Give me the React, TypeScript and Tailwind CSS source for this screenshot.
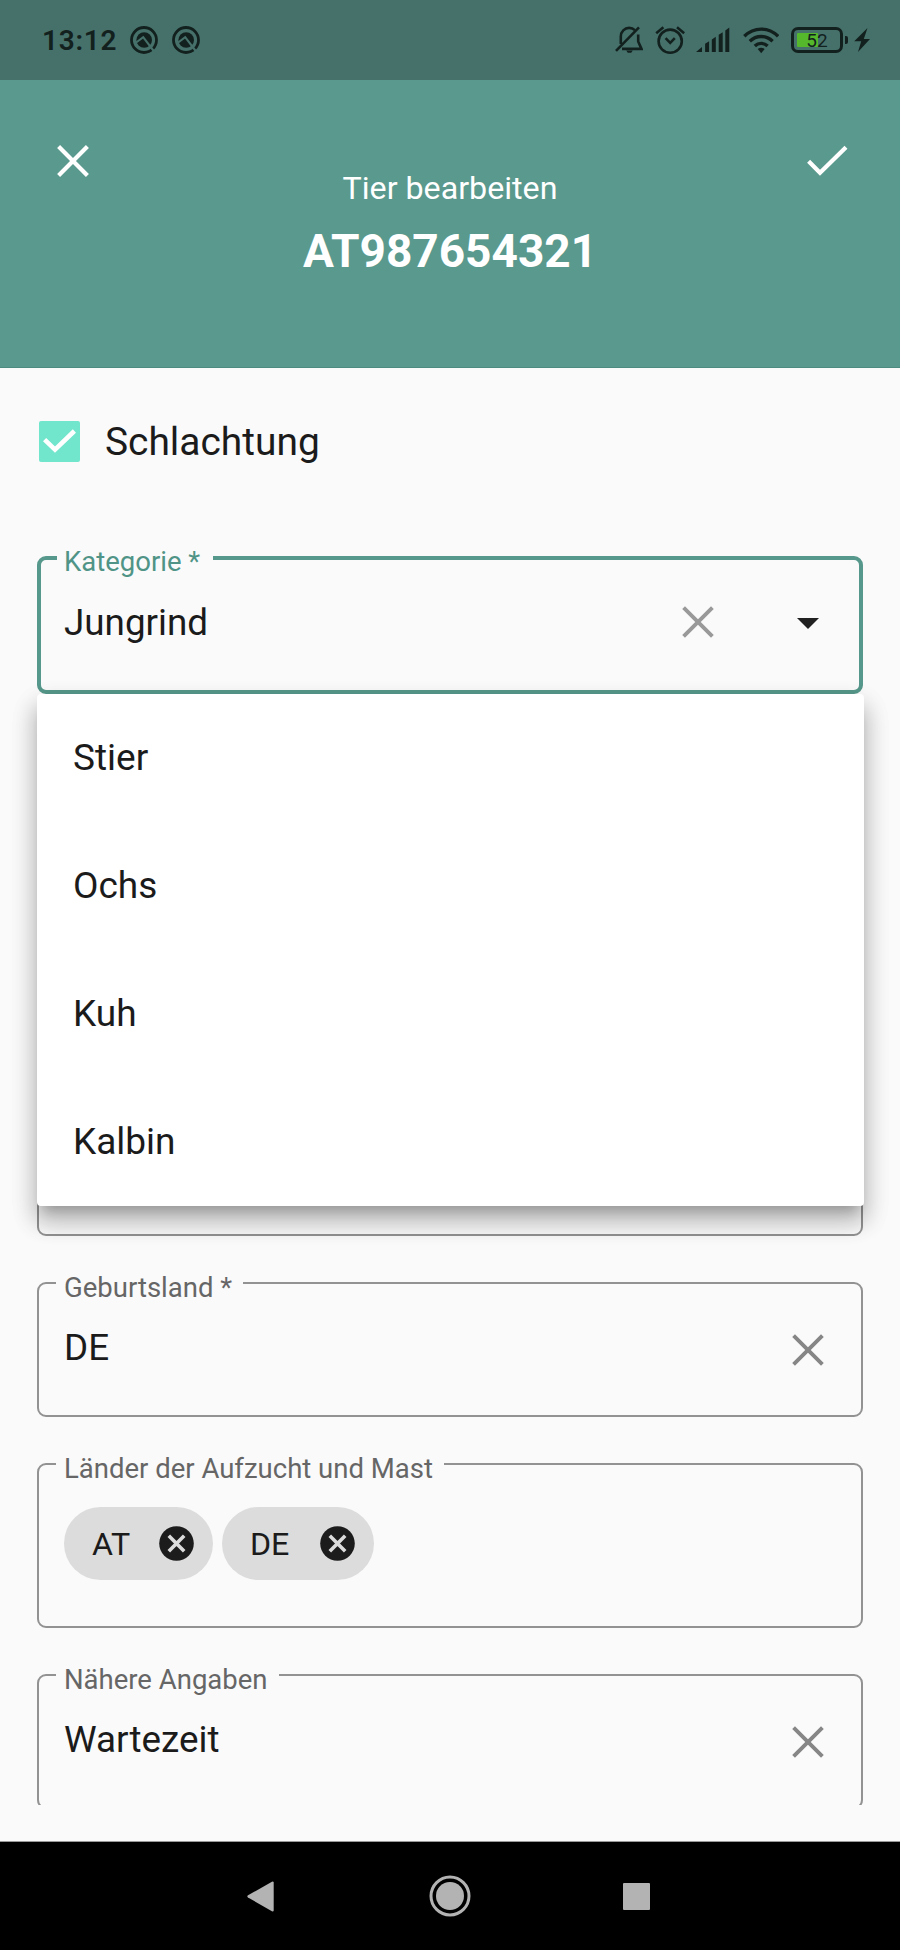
import type { ReactNode } from 'react';

const STATUS_INK = '#13211e';

function AppBadge() {
  return (
    <svg width="28" height="28" viewBox="0 0 28 28" fill="none">
      <circle cx="14" cy="14" r="12.5" stroke={STATUS_INK} strokeWidth="2.8" />
      <circle cx="14.2" cy="14" r="7.8" fill={STATUS_INK} />
      <path d="M5.5 17 13.2 11.2 24.5 26" stroke="#46716b" strokeWidth="2.1" />
    </svg>
  );
}

function BellOff() {
  return (
    <svg width="28" height="28" viewBox="614 26 28 28" fill="none" stroke={STATUS_INK} strokeWidth="2.6">
      <path d="M619.8 44V36.5c0-5 3.8-8.6 8.3-8.6 2.3 0 4.3.8 5.8 2.3M637.2 34.5v7l3.3 7.4H621" />
      <path d="M615 50.8 638 27.4" />
      <path d="M625.2 50.6h6.6l-1.6 2.1h-3.4z" fill={STATUS_INK} stroke="none" />
    </svg>
  );
}

function Alarm() {
  return (
    <svg width="30" height="30" viewBox="654 25 30 30" fill="none" stroke={STATUS_INK} strokeWidth="2.6">
      <circle cx="669.2" cy="41.2" r="11.6" />
      <path d="m664.6 38.2 4.6 4.6 4.6-4.6M655.2 33.2l7.2-6M676 27.2l7.2 6" />
    </svg>
  );
}

function Signal() {
  return (
    <svg width="34" height="26" viewBox="695 27 34 26" fill={STATUS_INK}>
      <path d="m695 52 6-5v5zM704.1 43.8l4-2.5V52h-4zM710.8 39.4l4-2.6V52h-4zM717.7 34.8l4-2.6V52h-4zM724.3 30.4l4-2.8V52h-4z" />
    </svg>
  );
}

function Wifi() {
  return (
    <svg width="36" height="28" viewBox="741.5 26 36 28" fill="none" stroke={STATUS_INK} strokeWidth="3.4">
      <path d="M742.8 36.3c9.6-9.6 24.2-9.6 33.8 0M748.3 41.2c6.5-6.3 16.3-6.3 22.8 0M753.3 46c3.7-3.5 9.1-3.5 12.8 0" />
      <path d="M756.2 49c2-1.7 5-1.7 7 0l-3.5 4.3z" fill={STATUS_INK} stroke="none" />
    </svg>
  );
}

function Battery() {
  return (
    <div className="flex items-center">
      <div className="relative flex h-[26px] w-[52px] items-center rounded-[7px] border-3 border-[#13211e] pl-[3px]">
        <div className="h-[14px] w-[21px] rounded-[1px] bg-[#55b82c]" />
        <span className="absolute inset-x-0 top-[1px] text-center text-[19px] leading-[20px] text-[#13211e]">52</span>
      </div>
      <div className="ml-[2px] h-[8px] w-[3px] rounded-r-[2px] bg-[#13211e]" />
    </div>
  );
}

function Bolt() {
  return (
    <svg width="16" height="24" viewBox="853 28 16 24" fill={STATUS_INK}>
      <path d="m866.5 28-13.3 13.2h7L857 52l12-13h-6.2z" />
    </svg>
  );
}

function Cross({ className = '', width = 4.2 }: { className?: string; width?: number }) {
  return (
    <svg width="32" height="32" viewBox="0 0 32 32" fill="none" stroke="currentColor" strokeWidth={width} className={className}>
      <path d="m1.6 1.6 28.8 28.8M30.4 1.6 1.6 30.4" />
    </svg>
  );
}

type FieldProps = {
  label?: string;
  gap?: string;
  box?: string;
  active?: boolean;
  children?: ReactNode;
};

function Field({ label, gap = '', box = 'h-[135px]', active = false, children }: FieldProps) {
  return (
    <fieldset
      className={
        active
          ? 'h-[138px] min-w-0 shrink-0 rounded-[9px] border-4 border-[#56988b] pl-[16px] pr-[40px]'
          : `${box} min-w-0 shrink-0 rounded-[9px] border-2 border-[#929292] pl-[17px] pr-[37px]`
      }
    >
      {label && (
        <legend className={`${gap} ${active ? 'h-1 pl-[7px] text-[#4f9486]' : 'h-0.5 pl-2 text-[#666666]'} flex items-center`}>
          <span className={`${active ? 'translate-y-1' : 'translate-y-[5px]'} text-[27.5px] leading-8 whitespace-nowrap`}>
            {label}
          </span>
        </legend>
      )}
      {children}
    </fieldset>
  );
}

function Chip({ label, className }: { label: string; className: string }) {
  return (
    <div className={`${className} flex h-[73px] items-center justify-between rounded-full bg-[#dcdcdc] pr-[19px] pl-7`}>
      <span className="text-[32.2px] leading-9">{label}</span>
      <svg width="35" height="35" viewBox="0 0 35 35" fill="none">
        <circle cx="17.5" cy="17.5" r="17.3" fill="#1c1c1c" />
        <path d="m9.8 9.8 15.4 15.4M25.2 9.8 9.8 25.2" stroke="#dcdcdc" strokeWidth="3.6" />
      </svg>
    </div>
  );
}

const OPTIONS = ['Stier', 'Ochs', 'Kuh', 'Kalbin'];

export default function App() {
  return (
    <div className="flex h-[1950px] w-[900px] flex-col overflow-hidden bg-[#fafafa] font-[Roboto,sans-serif] text-[#1b1b1b]">
      <div className="flex h-20 shrink-0 items-center bg-[#46716b] pr-[30px] pl-[42px]">
        <span className="w-[88px] pt-px text-[28px] leading-8 font-semibold tracking-[0.7px] text-[#13211e]">13:12</span>
        <AppBadge />
        <div className="w-3.5" />
        <AppBadge />
        <div className="ml-auto flex items-center">
          <BellOff />
          <div className="w-3" />
          <Alarm />
          <div className="w-[11px]" />
          <Signal />
          <div className="w-[13px]" />
          <Wifi />
          <div className="w-[12px]" />
          <Battery />
          <div className="w-[6px]" />
          <Bolt />
        </div>
      </div>

      <header className="flex h-72 shrink-0 justify-between border-b border-[#4c8b7f] bg-[#5a998d] px-[57px] pt-[65px] text-white">
        <Cross />
        <div className="ml-1 pt-6 text-center">
          <p className="text-[32.2px] leading-[38px]">Tier bearbeiten</p>
          <h1 className="mt-[17px] text-[46px] leading-[54px] font-bold">AT987654321</h1>
        </div>
        <svg width="41" height="32" viewBox="0 0 41 32" fill="none" stroke="currentColor" strokeWidth="4.2" className="mr-[-5px]">
          <path d="M1.6 16.2 13 27.8 39 2.2" />
        </svg>
      </header>

      <main className="flex h-[1437px] shrink-0 flex-col overflow-hidden px-[37px] pt-[52px]">
        <label className="flex h-[42px] shrink-0 items-center pl-[2px]">
          <span className="flex size-[41px] items-center justify-center rounded-[2px] bg-[#72e5cd]">
            <svg width="33" height="24" viewBox="0 0 33 24" fill="none" stroke="#fff" strokeWidth="4.6">
              <path d="M1.6 10.6 12 20.6 31.4 2" />
            </svg>
          </span>
          <span className="ml-[25px] pt-0.5 text-[38.9px] leading-[42px]">Schlachtung</span>
        </label>

        <div className="relative mt-[94px] h-[137px] shrink-0">
          <Field label="Kategorie *" gap="w-[156px]" active>
            <div className="flex h-[124px] items-center pl-[7px]">
              <span className="pt-0.5 text-[36.8px] leading-[44px]">Jungrind</span>
              <Cross className="ml-auto text-[#999999]" width={3.9} />
              <svg width="22" height="11" viewBox="0 0 22 11" className="mt-0.5 ml-[83px]">
                <path d="M0 0h22L11 11z" fill="#212121" />
              </svg>
            </div>
          </Field>
          <ul className="absolute top-full left-0 z-10 mt-px w-[827px] rounded-[4px] bg-white shadow-[0_11px_11px_-7px_rgba(0,0,0,0.18),0_14px_23px_2px_rgba(0,0,0,0.2),0_12px_26px_3px_rgba(0,0,0,0.1)]">
            {OPTIONS.map((option) => (
              <li key={option} className="flex h-32 items-center pl-9 text-[37px] leading-[44px]">
                {option}
              </li>
            ))}
          </ul>
        </div>

        <div className="mt-[46px] flex flex-col gap-[46px]">
          <Field />
          <Field />
          <Field />
          <Field label="Geburtsland *" gap="w-[187px]">
            <div className="flex h-[132px] items-center pl-2">
              <span className="mb-[4px] text-[36.8px] leading-[44px]">DE</span>
              <Cross className="ml-auto text-[#868686]" width={3.9} />
            </div>
          </Field>
          <Field label="Länder der Aufzucht und Mast" gap="w-[388px]" box="h-[165px]">
            <div className="flex gap-[9px] pt-[42px] pl-2">
              <Chip label="AT" className="w-[149px]" />
              <Chip label="DE" className="w-[152px]" />
            </div>
          </Field>
          <Field label="Nähere Angaben" gap="w-[223px]">
            <div className="flex h-[132px] items-center pl-2">
              <span className="mb-[4px] text-[36.8px] leading-[44px]">Wartezeit</span>
              <Cross className="ml-auto text-[#868686]" width={3.9} />
            </div>
          </Field>
        </div>
      </main>

      <nav className="mt-auto flex h-[109px] shrink-0 items-center border-t border-[#999999] bg-black pl-[247px]">
        <svg width="27" height="31" viewBox="0 0 27 31" fill="#b3b3b3">
          <path d="M25.4.5 1 14.3q-1.4 1.1 0 2.2L25.4 30.5q1.3 0 1.3-1V1.5q0-1-1.3-1z" />
        </svg>
        <svg width="42" height="42" viewBox="0 0 42 42" fill="none" className="ml-[155px]">
          <circle cx="21" cy="21" r="19" stroke="#b3b3b3" strokeWidth="3" />
          <circle cx="21" cy="21" r="14" fill="#b3b3b3" />
        </svg>
        <div className="ml-[152px] size-[27px] rounded-[1px] bg-[#b3b3b3]" />
      </nav>
    </div>
  );
}
